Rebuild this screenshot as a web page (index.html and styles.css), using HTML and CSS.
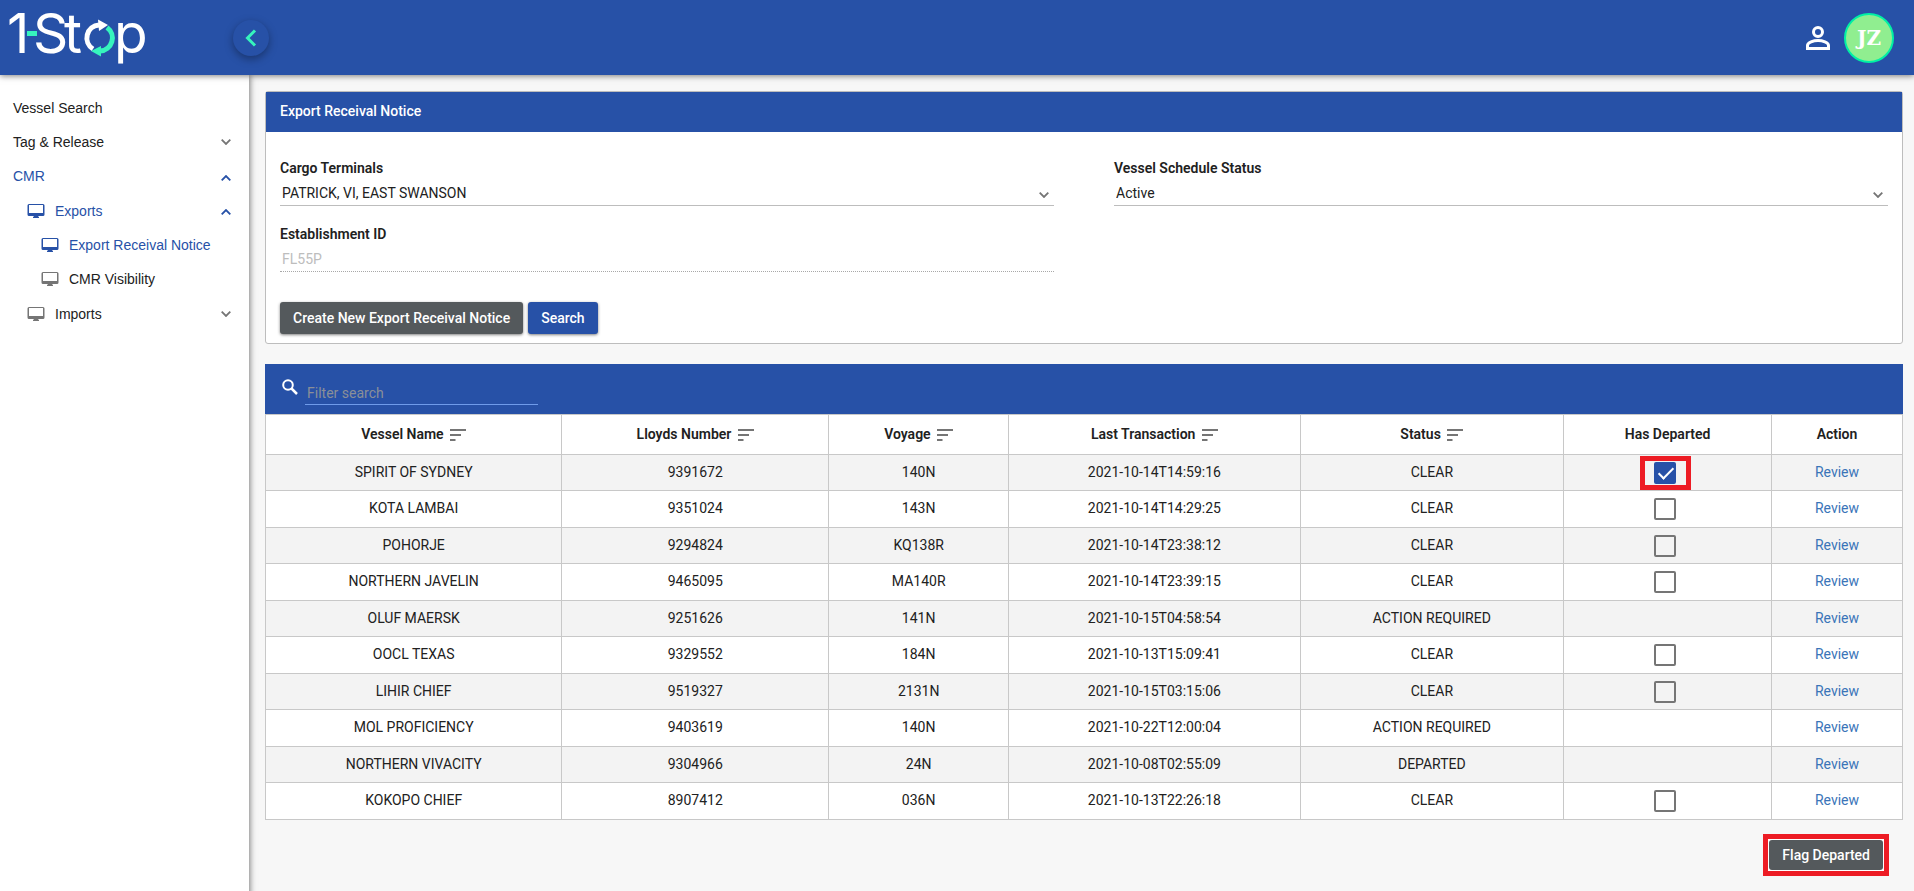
FILE: index.html
```
<!DOCTYPE html>
<html lang="en">
<head>
    <meta charset="UTF-8">
    <meta name="viewport" content="width=device-width, initial-scale=1.0">
    <title>Export Receival Notice</title>
    <link rel="stylesheet" href="styles.css">
</head>
<body>
    <svg class="sprite" aria-hidden="true">
        <symbol id="chevron-down" viewBox="0 0 10 6"><path d="M.7.7 5 5 9.3.7" fill="none" stroke="currentColor" stroke-width="1.8"/></symbol>
        <symbol id="chevron-up" viewBox="0 0 10 6"><path d="M.7 5.3 5 1l4.3 4.3" fill="none" stroke="currentColor" stroke-width="1.8"/></symbol>
        <symbol id="monitor" viewBox="0 0 18 16"><path fill="currentColor" d="M2 1h14a1.500 1.500 0 0 1 1.500 1.500v9A1.500 1.500 0 0 1 16 13h-5l1 1.200V15H6v-.8L7 13H2A1.500 1.500 0 0 1 .5 11.500v-9A1.500 1.500 0 0 1 2 1zm0 1v8h14V2z"/></symbol>
        <symbol id="sort" viewBox="0 0 16 12"><path fill="currentColor" d="M0 0h16v2H0zM0 5h11v2H0zM0 10h5.500v2H0z"/></symbol>
    </svg>

    <header class="topbar">
        <a href="#" class="logo" aria-label="1-Stop">
            <svg width="158" height="75" viewBox="0 0 158 75">
                <text class="logo-text" x="7" y="53">1</text>
                <text class="logo-text" x="33" y="53">S</text>
                <text class="logo-text" x="64" y="53">t</text>
                <text class="logo-text" x="114" y="53">p</text>
                <rect x="27" y="31" width="10" height="5" fill="#36f5bd"/>
                <path d="M93 49A13 13 0 0 1 99 25" fill="none" stroke="#fff" stroke-width="5"/>
                <path d="M98 19.500l10 5.500-9 6z" fill="#fff"/>
                <path d="M107 27.500A13 13 0 0 1 100 51" fill="none" stroke="#36f5bd" stroke-width="5"/>
                <path d="M101 46v10.500L91 51z" fill="#36f5bd"/>
            </svg>
        </a>
        <button class="collapse-btn" aria-label="Collapse menu">
            <svg width="12" height="18" viewBox="0 0 12 18"><path d="M10 1.500 2.500 9l7.500 7.500" fill="none" stroke="#36f5bd" stroke-width="3"/></svg>
        </button>
        <div class="user">
            <svg width="24" height="24" viewBox="0 0 24 24" fill="none" stroke="#fff" stroke-width="3"><circle cx="12" cy="6" r="4.500"/><path d="M1.500 22.500v-3c0-3 6-5 10.500-5s10.500 2 10.500 5v3z"/></svg>
            <span class="avatar">JZ</span>
        </div>
    </header>

    <div class="layout">
        <nav class="sidebar">
            <a href="#">Vessel Search</a>
            <a href="#">Tag &amp; Release <svg class="chevron"><use href="#chevron-down"/></svg></a>
            <a href="#" class="active">CMR <svg class="chevron"><use href="#chevron-up"/></svg></a>
            <a href="#" class="active level-2"><svg class="monitor"><use href="#monitor"/></svg>Exports <svg class="chevron"><use href="#chevron-up"/></svg></a>
            <a href="#" class="active level-3"><svg class="monitor"><use href="#monitor"/></svg>Export Receival Notice</a>
            <a href="#" class="level-3"><svg class="monitor"><use href="#monitor"/></svg>CMR Visibility</a>
            <a href="#" class="level-2"><svg class="monitor"><use href="#monitor"/></svg>Imports <svg class="chevron"><use href="#chevron-down"/></svg></a>
        </nav>

        <main>
            <section class="card">
                <h1>Export Receival Notice</h1>
                <form class="card-body">
                    <div class="fields">
                        <div class="field">
                            <label for="terminals">Cargo Terminals</label>
                            <div class="select">
                                <select id="terminals"><option>PATRICK, VI, EAST SWANSON</option></select>
                                <svg class="chevron"><use href="#chevron-down"/></svg>
                            </div>
                        </div>
                        <div class="field">
                            <label for="status">Vessel Schedule Status</label>
                            <div class="select">
                                <select id="status"><option>Active</option></select>
                                <svg class="chevron"><use href="#chevron-down"/></svg>
                            </div>
                        </div>
                        <div class="field">
                            <label for="establishment">Establishment ID</label>
                            <input type="text" id="establishment" value="FL55P" disabled>
                        </div>
                    </div>
                    <div class="actions">
                        <button type="button" class="btn">Create New Export Receival Notice</button>
                        <button type="button" class="btn btn-primary">Search</button>
                    </div>
                </form>
            </section>

            <section>
                <div class="filter">
                    <svg width="16" height="16" viewBox="0 0 16 16" fill="none" stroke="#fff"><circle cx="6" cy="6" r="4.800" stroke-width="2"/><path d="M9.500 9.500l5.500 5.500" stroke-width="2.500"/></svg>
                    <input type="text" placeholder="Filter search" aria-label="Filter search">
                </div>
                <table>
                    <colgroup>
                        <col class="col-vessel">
                        <col class="col-lloyds">
                        <col class="col-voyage">
                        <col class="col-transaction">
                        <col class="col-status">
                        <col class="col-departed">
                        <col class="col-action">
                    </colgroup>
                    <thead>
                        <tr>
                            <th>Vessel Name <svg class="sort"><use href="#sort"/></svg></th>
                            <th>Lloyds Number <svg class="sort"><use href="#sort"/></svg></th>
                            <th>Voyage <svg class="sort"><use href="#sort"/></svg></th>
                            <th>Last Transaction <svg class="sort"><use href="#sort"/></svg></th>
                            <th>Status <svg class="sort"><use href="#sort"/></svg></th>
                            <th>Has Departed</th>
                            <th>Action</th>
                        </tr>
                    </thead>
                    <tbody>
                        <tr>
                            <td>SPIRIT OF SYDNEY</td><td>9391672</td><td>140N</td><td>2021-10-14T14:59:16</td><td>CLEAR</td>
                            <td class="departed"><span class="highlight highlight-check"><input type="checkbox" aria-label="SPIRIT OF SYDNEY has departed" checked></span></td>
                            <td><a href="#">Review</a></td>
                        </tr>
                        <tr>
                            <td>KOTA LAMBAI</td><td>9351024</td><td>143N</td><td>2021-10-14T14:29:25</td><td>CLEAR</td>
                            <td class="departed"><input type="checkbox" aria-label="KOTA LAMBAI has departed"></td>
                            <td><a href="#">Review</a></td>
                        </tr>
                        <tr>
                            <td>POHORJE</td><td>9294824</td><td>KQ138R</td><td>2021-10-14T23:38:12</td><td>CLEAR</td>
                            <td class="departed"><input type="checkbox" aria-label="POHORJE has departed"></td>
                            <td><a href="#">Review</a></td>
                        </tr>
                        <tr>
                            <td>NORTHERN JAVELIN</td><td>9465095</td><td>MA140R</td><td>2021-10-14T23:39:15</td><td>CLEAR</td>
                            <td class="departed"><input type="checkbox" aria-label="NORTHERN JAVELIN has departed"></td>
                            <td><a href="#">Review</a></td>
                        </tr>
                        <tr>
                            <td>OLUF MAERSK</td><td>9251626</td><td>141N</td><td>2021-10-15T04:58:54</td><td>ACTION REQUIRED</td>
                            <td class="departed"></td>
                            <td><a href="#">Review</a></td>
                        </tr>
                        <tr>
                            <td>OOCL TEXAS</td><td>9329552</td><td>184N</td><td>2021-10-13T15:09:41</td><td>CLEAR</td>
                            <td class="departed"><input type="checkbox" aria-label="OOCL TEXAS has departed"></td>
                            <td><a href="#">Review</a></td>
                        </tr>
                        <tr>
                            <td>LIHIR CHIEF</td><td>9519327</td><td>2131N</td><td>2021-10-15T03:15:06</td><td>CLEAR</td>
                            <td class="departed"><input type="checkbox" aria-label="LIHIR CHIEF has departed"></td>
                            <td><a href="#">Review</a></td>
                        </tr>
                        <tr>
                            <td>MOL PROFICIENCY</td><td>9403619</td><td>140N</td><td>2021-10-22T12:00:04</td><td>ACTION REQUIRED</td>
                            <td class="departed"></td>
                            <td><a href="#">Review</a></td>
                        </tr>
                        <tr>
                            <td>NORTHERN VIVACITY</td><td>9304966</td><td>24N</td><td>2021-10-08T02:55:09</td><td>DEPARTED</td>
                            <td class="departed"></td>
                            <td><a href="#">Review</a></td>
                        </tr>
                        <tr>
                            <td>KOKOPO CHIEF</td><td>8907412</td><td>036N</td><td>2021-10-13T22:26:18</td><td>CLEAR</td>
                            <td class="departed"><input type="checkbox" aria-label="KOKOPO CHIEF has departed"></td>
                            <td><a href="#">Review</a></td>
                        </tr>
                    </tbody>
                </table>
                <div class="table-footer">
                    <span class="highlight highlight-btn"><button class="btn">Flag Departed</button></span>
                </div>
            </section>
        </main>
    </div>
</body>
</html>
```
FILE: styles.css
```
* {
    box-sizing: border-box;
}
body {
    margin: 0;
    min-height: 100vh;
    display: flex;
    flex-direction: column;
    background-color: #f7f7f7;
    color: #212121;
    font-family: Roboto, sans-serif;
    font-size: 14px;
    line-height: 20px;
}
a {
    text-decoration: none;
}
input, select, button {
    font: inherit;
}
.sprite {
    position: absolute;
    width: 0;
    height: 0;
}

/* Top bar */
.topbar {
    position: relative;
    z-index: 2;
    height: 75px;
    padding-right: 20px;
    display: flex;
    align-items: center;
    background-color: #2751a7;
    box-shadow: 0 1px 6px rgba(0,0,0,0.5);
}
.logo {
    display: flex;
}
.logo svg {
    overflow: visible;
}
.logo-text {
    font-family: Inter, sans-serif;
    font-size: 55px;
    fill: white;
}
.collapse-btn {
    width: 36px;
    height: 36px;
    margin-left: 75px;
    padding: 0;
    display: flex;
    align-items: center;
    justify-content: center;
    border: none;
    border-radius: 50%;
    background-color: #2751a7;
    box-shadow: 0 3px 8px rgba(0,0,0,0.35);
    cursor: pointer;
}
.user {
    margin-left: auto;
    display: flex;
    align-items: center;
    gap: 14px;
}
.avatar {
    width: 50px;
    height: 50px;
    display: flex;
    align-items: center;
    justify-content: center;
    border: 2px solid #00f0a5;
    border-radius: 50%;
    background-color: #90ee90;
    color: white;
    font-family: "DejaVu Serif", serif;
    font-size: 20px;
    font-weight: bold;
}

.layout {
    flex: 1;
    display: flex;
}

/* Side menu */
.sidebar {
    z-index: 1;
    width: 249px;
    flex-shrink: 0;
    padding-top: 16px;
    background-color: white;
    box-shadow: 1px 0 6px rgba(0,0,0,0.5);
    font-family: "Liberation Sans", Arial, sans-serif;
}
.sidebar a {
    height: 34px;
    padding: 0 18px 0 13px;
    display: flex;
    align-items: center;
    color: #212121;
}
.sidebar .level-2 {
    height: 35px;
    padding-left: 27px;
}
.sidebar .level-3 {
    padding-left: 41px;
}
.sidebar .active {
    color: #2751a7;
}
.monitor {
    width: 18px;
    height: 16px;
    margin-right: 10px;
    color: #757575;
}
.chevron {
    width: 10px;
    height: 6px;
    margin-left: auto;
    color: #757575;
}
.active .monitor, .active .chevron {
    color: #2751a7;
}
.active .chevron {
    margin-top: 3px;
}

main {
    flex: 1;
    min-width: 0;
    padding: 16px 11px 16px 16px;
}

/* Search form */
.card {
    margin-bottom: 20px;
    border: 1px solid #bdbdbd;
    border-radius: 3px;
    background-color: white;
}
h1 {
    margin: 0;
    padding: 9px 14px 11px;
    background-color: #2751a7;
    color: white;
    font-size: 14px;
    font-weight: 500;
}
.card-body {
    padding: 26px 14px 9px;
}
.fields {
    display: grid;
    grid-template-columns: 1fr 1fr;
    gap: 18px 60px;
}
label, th {
    font-weight: 600;
}
label {
    display: block;
}
.select {
    position: relative;
}
.select select, .field input {
    display: block;
    width: 100%;
    height: 28px;
    padding: 2px 2px 0;
    border: none;
    border-bottom: 1px solid #bdbdbd;
    border-radius: 0;
    background: transparent;
    color: #212121;
    appearance: none;
}
.field input:disabled {
    border-bottom: 1px dotted #a8a8a8;
    color: #bdbdbd;
}
.select .chevron {
    position: absolute;
    right: 5px;
    top: 14px;
    pointer-events: none;
}
.actions {
    margin-top: 30px;
    display: flex;
    gap: 5px;
}
.btn {
    height: 32px;
    padding: 0 13px;
    border: none;
    border-radius: 3px;
    background-color: #54595c;
    color: white;
    font-weight: 500;
    box-shadow: 0 1px 3px rgba(0,0,0,0.5);
    cursor: pointer;
}
.btn-primary {
    background-color: #2751a7;
}

/* Results */
.filter {
    height: 50px;
    padding: 0 17px 9px;
    display: flex;
    align-items: center;
    gap: 7px;
    background-color: #2751a7;
}
.filter svg {
    margin-top: 5px;
}
.filter input {
    width: 233px;
    height: 24px;
    padding: 0 2px;
    align-self: flex-end;
    border: none;
    border-bottom: 1px solid #6f9bea;
    background: transparent;
    color: white;
    outline: none;
}
.filter input::placeholder {
    color: #8a8f98;
}
table {
    width: 100%;
    table-layout: fixed;
    border-collapse: collapse;
    background-color: white;
    text-align: center;
}
.col-vessel { width: 18.1%; }
.col-lloyds { width: 16.3%; }
.col-voyage { width: 11%; }
.col-transaction { width: 17.8%; }
.col-status { width: 16.1%; }
.col-departed { width: 12.7%; }
.col-action { width: 8%; }
th, td {
    padding: 0 0 2px;
    border: 1px solid #c8c8c8;
}
th {
    height: 40px;
}
td {
    height: 36px;
}
tbody tr:nth-child(even) td {
    height: 37px;
}
tbody tr:nth-child(odd) {
    background-color: #f3f3f3;
}
td a {
    color: #3a74b8;
}
.departed {
    padding: 0 5px 0 0;
}
.sort {
    width: 16px;
    height: 12px;
    margin-left: 3px;
    vertical-align: -2px;
    color: #757575;
}
input[type="checkbox"] {
    position: relative;
    width: 22px;
    height: 22px;
    margin: 0;
    border: 2px solid #757575;
    border-radius: 2px;
    appearance: none;
    vertical-align: middle;
}
input[type="checkbox"]:checked {
    border-color: #2751a7;
    background-color: #2751a7;
}
input[type="checkbox"]:checked::after {
    content: "";
    position: absolute;
    left: 6px;
    top: 0;
    width: 6px;
    height: 13px;
    border: solid white;
    border-width: 0 2px 2px 0;
    transform: rotate(45deg);
}

/* Red boxes that point out the controls to use */
.highlight {
    display: inline-flex;
    align-items: center;
    justify-content: center;
    vertical-align: middle;
    border: 5px solid #ed1c24;
}
.highlight-check {
    width: 51px;
    height: 34px;
}
.highlight-btn {
    padding: 1px;
    background-color: white;
}
.highlight-btn .btn {
    height: 30px;
    box-shadow: none;
}
.table-footer {
    padding: 14px;
    display: flex;
    justify-content: flex-end;
}
```
